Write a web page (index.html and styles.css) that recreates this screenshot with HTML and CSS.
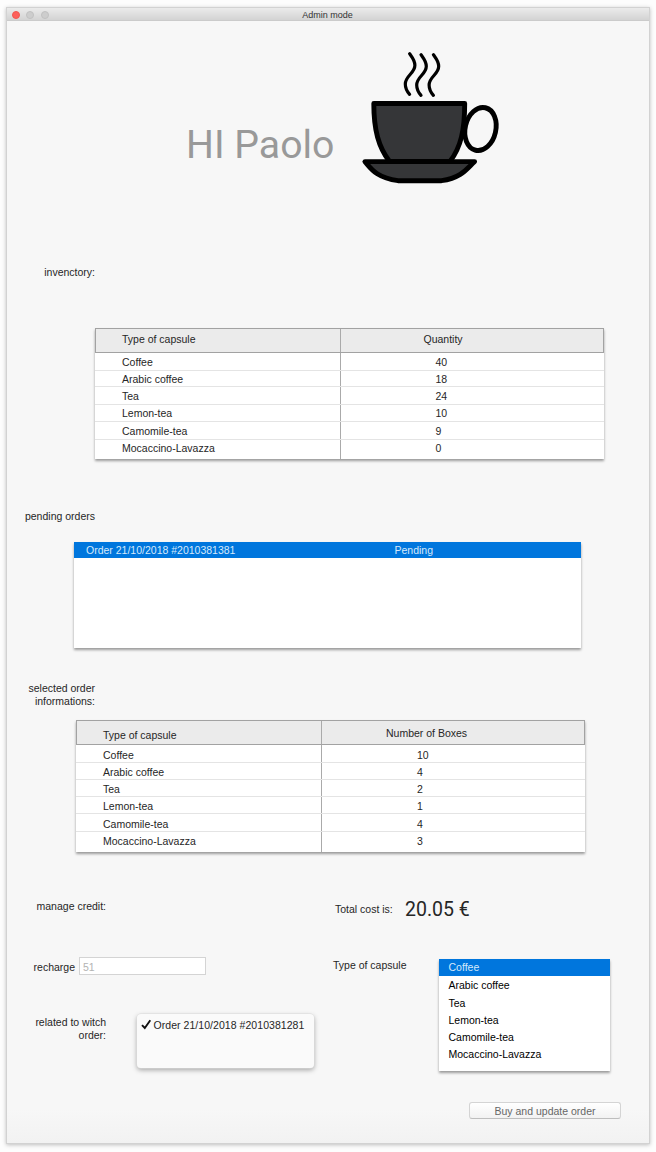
FILE: index.html
```html
<!DOCTYPE html>
<html lang="en">
<head>
<meta charset="utf-8">
<title>Admin mode</title>
<link rel="stylesheet" href="styles.css">
</head>
<body>
<div class="window">
  <header class="titlebar">
    <span class="light close"></span><span class="light"></span><span class="light"></span>
    <h1 class="title">Admin mode</h1>
  </header>
  <main class="content">
    <section class="hero">
      <h2 class="greeting">HI Paolo</h2>
      <svg class="cup" width="142" height="140" viewBox="360 48 142 140" fill="none" stroke="#000" stroke-width="4.9" stroke-linejoin="round" stroke-linecap="round">
        <ellipse cx="480.5" cy="129" rx="15.3" ry="21.8" transform="rotate(13 480.5 129)"/>
        <path fill="#353638" d="M373.8 103.5H464.7C464.7 130 461 147 450 161.5H389.5C378.5 147 373.8 130 373.8 103.5Z"/>
        <path fill="#353638" d="M364.9 161.6H474.6C468 167 463 177.500 441.500 180.700H398C376 177.500 371 168.500 364.900 161.600Z"/>
        <g stroke-width="3.200">
          <path d="M409.600 53.700C411.500 56.500 414.900 60 414.900 65.300C414.900 73.500 405.300 75.500 405.300 84C405.300 88.500 407.500 92 409.600 94.400"/>
          <path d="M421 54.700C422.900 57.500 426.300 61 426.300 66.300C426.300 74.500 416.700 76.500 416.700 85C416.700 89.500 418.900 93 421 95.400"/>
          <path d="M433.400 54.700C435.300 57.500 438.700 61 438.700 66.300C438.700 74.500 429.100 76.500 429.100 85C429.100 89.500 431.300 93 433.400 95.400"/>
        </g>
      </svg>
    </section>

    <p class="label">invenctory:</p>
    <div class="table inventory">
      <div class="row head"><span>Type of capsule</span><span>Quantity</span></div>
      <div class="row"><span>Coffee</span><span>40</span></div>
      <div class="row"><span>Arabic coffee</span><span>18</span></div>
      <div class="row"><span>Tea</span><span>24</span></div>
      <div class="row"><span>Lemon-tea</span><span>10</span></div>
      <div class="row"><span>Camomile-tea</span><span>9</span></div>
      <div class="row"><span>Mocaccino-Lavazza</span><span>0</span></div>
    </div>

    <p class="label pending-label">pending orders</p>
    <div class="orders">
      <div class="order"><span>Order 21/10/2018 #2010381381</span><span>Pending</span></div>
    </div>

    <p class="label selected-label">selected order<br>informations:</p>
    <div class="table selected">
      <div class="row head"><span class="low">Type of capsule</span><span>Number of Boxes</span></div>
      <div class="row"><span>Coffee</span><span>10</span></div>
      <div class="row"><span>Arabic coffee</span><span>4</span></div>
      <div class="row"><span>Tea</span><span>2</span></div>
      <div class="row"><span>Lemon-tea</span><span>1</span></div>
      <div class="row"><span>Camomile-tea</span><span>4</span></div>
      <div class="row"><span>Mocaccino-Lavazza</span><span>3</span></div>
    </div>

    <section class="bottom">
      <div class="credit">
        <p class="credit-label">manage credit:</p>
        <div class="recharge"><label for="amount">recharge</label><input id="amount" class="amount" placeholder="51"></div>
        <div class="related">
          <p class="credit-label">related to witch<br>order:</p>
          <div class="popup">
            <svg class="check" width="11" height="11" viewBox="0 0 11 11" fill="none" stroke="#111" stroke-width="1.900"><path d="M1 6.100L3.800 9L9.300 1.300"/></svg>
            <span class="choice">Order 21/10/2018 #2010381281</span>
          </div>
        </div>
      </div>
      <div class="purchase">
        <div class="total"><span>Total cost is:</span><strong class="price">20.05 €</strong></div>
        <div class="capsule">
          <span class="capsule-label">Type of capsule</span>
          <ul class="options">
            <li class="active">Coffee</li>
            <li>Arabic coffee</li>
            <li>Tea</li>
            <li>Lemon-tea</li>
            <li>Camomile-tea</li>
            <li>Mocaccino-Lavazza</li>
          </ul>
        </div>
        <button class="buy">Buy and update order</button>
      </div>
    </section>
  </main>
</div>
</body>
</html>
```
FILE: styles.css
```css
* { box-sizing: border-box; }
body {
  margin: 0;
  padding: 8px 7px 9px 7px;
  height: 1152px;
  overflow: hidden;
  background: #fdfdfd;
  color: #262626;
  font: 10.5px/13px "Liberation Sans", Arial, sans-serif;
}
h1, h2, p, ul { margin: 0; padding: 0; font-weight: 400; }
.window {
  width: 642px;
  height: 1135px;
  display: flex;
  flex-direction: column;
  background: #f7f7f7;
  box-shadow: 0 0 0 1px #d2d2d2, 0 1px 4px 1px rgba(0, 0, 0, .25);
}
.titlebar {
  height: 13px;
  flex: none;
  display: grid;
  grid-template-columns: 8px 8px 8px 1fr 43px;
  column-gap: 6.800px;
  align-items: center;
  padding-left: 4.500px;
  background: linear-gradient(#ebebeb, #d3d3d3);
  border-bottom: 1px solid #cbcbcb;
}
.light { width: 8px; height: 8px; border-radius: 50%; background: #cdcdcd; border: 1px solid #c1c1c1; }
.close { background: #fc605b; border-color: #f2564f; }
.title { font-size: 9px; line-height: 12px; text-align: center; padding-top: 1px; color: #333; }
.content {
  flex: 1;
  background: linear-gradient(#f7f7f7 97%, #f2f2f2);
}
.hero { height: 245px; display: flex; padding: 27px 0 0 179px; }
.greeting { width: 174px; padding-top: 74px; font: 400 39.200px/46px Roboto, sans-serif; color: #999; white-space: nowrap; }
.label { width: 88px; text-align: right; white-space: nowrap; }
.pending-label { margin-top: 51px; }
.selected-label { margin-top: 34px; }

.table {
  display: grid;
  width: 509px;
  background: #fff;
  box-shadow: 0 1.500px 2.500px rgba(0, 0, 0, .38);
}
.inventory { margin: 49px 0 0 88px; grid-template-rows: 25px 18px 16px 18px 17px 18px 19px; }
.selected { margin: 12px 0 0 69px; grid-template-rows: 25px 18px 17px 17px 17px 18px 20px; }
.row { display: grid; grid-template-columns: 246px 1fr; border-bottom: 1px solid #e4e4e4; }
.row:last-child { border-bottom: 0; }
.row span { display: flex; align-items: center; padding: 2px 0 0 27px; white-space: nowrap; }
.row span:first-child { border-right: 1px solid #aaa; }
.row span:last-child { padding-left: 95px; }
.inventory .row { grid-template-columns: 245.500px 1fr; }
.inventory .row:nth-child(5) span { padding-top: 0; }
.row:last-child span { padding-top: 0; padding-bottom: 2px; }
.selected .row:nth-child(2) span, .selected .row:nth-child(6) span { padding-top: 3px; }
.selected .row:last-child span { padding-bottom: 1px; }
.head { background: #ebebeb; border: 1px solid #a2a2a2; grid-template-columns: 245px 1fr; }
.inventory .head { grid-template-columns: 244.500px 1fr; }
.head span:first-child { padding: 0 0 2px 26px; }
.head span:last-child { padding: 0 0 2px 83px; }
.selected .head span:last-child { padding: 2px 0 0 64px; }
.selected .head .low { padding: 6px 0 0 26px; }

.orders { width: 507px; height: 106px; margin: 19px 0 0 67px; background: #fff; box-shadow: 0 1.500px 2.500px rgba(0, 0, 0, .38); }
.order { height: 16px; display: grid; grid-template-columns: 308.500px 1fr; align-items: center; padding: 1px 0 0 12px; background: #0076dd; color: #d5e9fb; }

.bottom { display: grid; grid-template-columns: 326px 1fr; padding-top: 48px; }
.credit-label { width: 99px; text-align: right; }
.recharge { display: flex; align-items: center; gap: 4px; margin-top: 44px; padding-left: 26px; height: 18px; }
.recharge label { width: 42px; padding-top: 3px; text-align: right; }
.amount { width: 127px; height: 18px; padding: 2px 0 0 3px; border: 1px solid #d4d4d4; border-radius: 0; background: #fff; font: inherit; }
.amount::placeholder { color: #b3b3b3; opacity: 1; }
.related { display: flex; gap: 31px; margin-top: 39px; }
.related .credit-label { padding-top: 2px; }
.popup {
  width: 177px; height: 54px; padding: 5px 0 0 4px;
  display: flex; align-items: flex-start; gap: 1.500px;
  border-radius: 4px; background: #fafafa; white-space: nowrap;
  box-shadow: 0 0 0 .5px #ddd, 0 2px 5px rgba(0, 0, 0, .35);
}
.choice { letter-spacing: .05px; }
.purchase { display: flex; flex-direction: column; }
.total { height: 20px; padding-left: 2px; display: flex; }
.total span { width: 70px; padding-top: 3px; white-space: nowrap; }
.price { font: 400 19.500px/20px Roboto, sans-serif; }
.capsule { display: flex; margin-top: 39px; }
.capsule-label { width: 106px; white-space: nowrap; }
.options { width: 171px; height: 112px; list-style: none; background: #fff; color: #000; box-shadow: 0 1.500px 2.500px rgba(0, 0, 0, .38); }
.options li { height: 17px; line-height: 17px; padding-left: 9.500px; }
.options .active { background: #0076dd; color: #d5e9fb; margin-bottom: 1px; }
.options li:nth-child(2) { margin-bottom: 1px; }
.buy {
  width: 152px; height: 17px; margin: 31px 0 0 136px; padding: 2px 0 0;
  border: 1px solid #d4d4d4; border-bottom-color: #bebebe; border-radius: 3px;
  background: linear-gradient(#fff, #f2f2f2); color: #666; font: inherit; line-height: 13px;
}
```
